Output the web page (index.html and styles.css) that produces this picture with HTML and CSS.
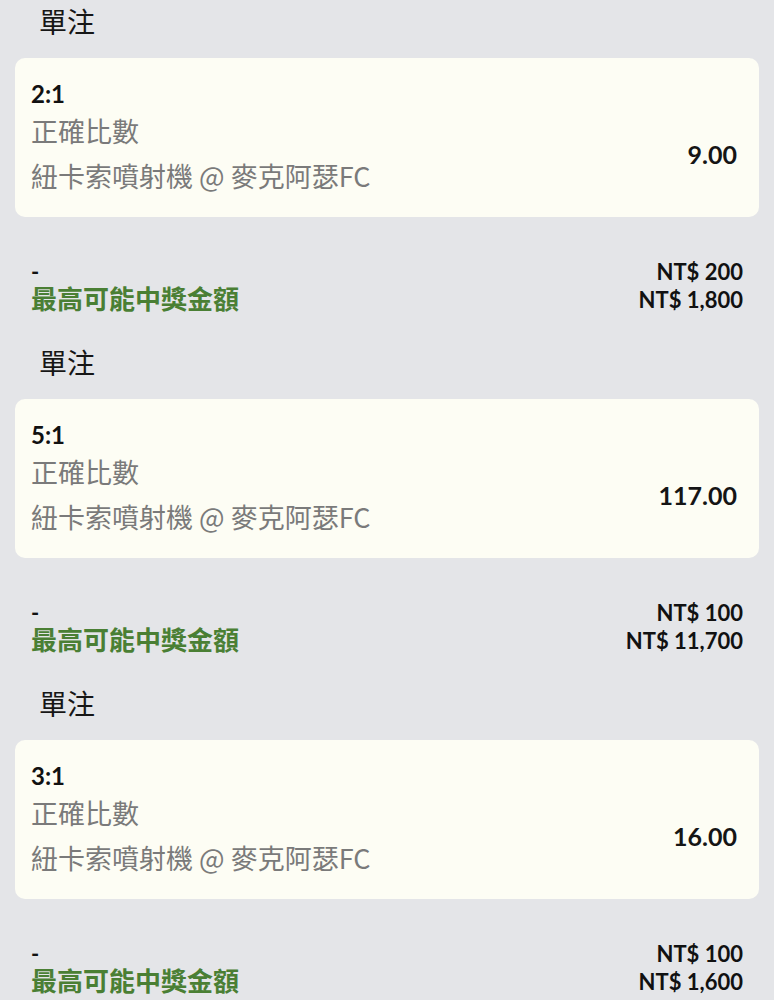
FILE: index.html
```html
<!DOCTYPE html>
<html lang="zh-Hant">
<head>
<meta charset="utf-8">
<title>單注</title>
<link rel="stylesheet" href="styles.css">
</head>
<body>
<div class="list">
  <section class="group">
    <h2 class="group-title">單注</h2>
    <div class="card">
      <div class="score">2:1</div>
      <div class="market">正確比數</div>
      <div class="match">紐卡索噴射機 @ 麥克阿瑟FC</div>
      <div class="odds">9.00</div>
    </div>
    <div class="summary">
      <div class="row"><span class="dash">-</span><span class="amt">NT$ 200</span></div>
      <div class="row"><span class="win">最高可能中獎金額</span><span class="amt">NT$ 1,800</span></div>
    </div>
  </section>
  <section class="group">
    <h2 class="group-title">單注</h2>
    <div class="card">
      <div class="score">5:1</div>
      <div class="market">正確比數</div>
      <div class="match">紐卡索噴射機 @ 麥克阿瑟FC</div>
      <div class="odds">117.00</div>
    </div>
    <div class="summary">
      <div class="row"><span class="dash">-</span><span class="amt">NT$ 100</span></div>
      <div class="row"><span class="win">最高可能中獎金額</span><span class="amt">NT$ 11,700</span></div>
    </div>
  </section>
  <section class="group">
    <h2 class="group-title">單注</h2>
    <div class="card">
      <div class="score">3:1</div>
      <div class="market">正確比數</div>
      <div class="match">紐卡索噴射機 @ 麥克阿瑟FC</div>
      <div class="odds">16.00</div>
    </div>
    <div class="summary">
      <div class="row"><span class="dash">-</span><span class="amt">NT$ 100</span></div>
      <div class="row"><span class="win">最高可能中獎金額</span><span class="amt">NT$ 1,600</span></div>
    </div>
  </section>
</div>
</body>
</html>
```
FILE: styles.css
```css
html, body {
  margin: 0;
  padding: 0;
  background: #e4e5e8;
}
body {
  font-family: Lato, "Noto Sans CJK TC", "Noto Sans", sans-serif;
  color: #111;
}
.group {
  padding-bottom: 28px;
}
.group-title {
  margin: 0;
  padding: 0 0 0 39px;
  height: 58px;
  line-height: 44px;
  font-size: 28px;
  font-weight: 400;
  color: #161616;
}
.card {
  margin: 0 15px;
  background: #fdfdf4;
  border-radius: 10px;
  padding: 20px 22px 18px 16px;
  display: grid;
  grid-template-columns: 1fr auto;
  grid-template-rows: 31px 44px 46px;
}
.score {
  grid-column: 1;
  font-size: 24px;
  font-weight: 700;
  line-height: 31px;
  color: #111;
}
.market, .match {
  grid-column: 1;
  font-family: "Noto Sans CJK TC", "Noto Sans", sans-serif;
  font-size: 27px;
  color: #7a7a7a;
  line-height: 44px;
}
.match {
  line-height: 46px;
}
.odds {
  grid-column: 2;
  grid-row: 2 / 4;
  align-self: center;
  font-size: 25px;
  font-weight: 700;
  color: #151515;
}
.summary {
  margin-top: 40px;
  padding: 0 31px;
}
.row {
  display: flex;
  justify-content: space-between;
  align-items: center;
  height: 28px;
}
.dash {
  font-size: 22px;
  font-weight: 700;
}
.win {
  font-size: 26px;
  font-weight: 700;
  color: #4a7f34;
  position: relative;
  top: -2px;
}
.amt {
  font-size: 22px;
  font-weight: 700;
  color: #111;
}
```
